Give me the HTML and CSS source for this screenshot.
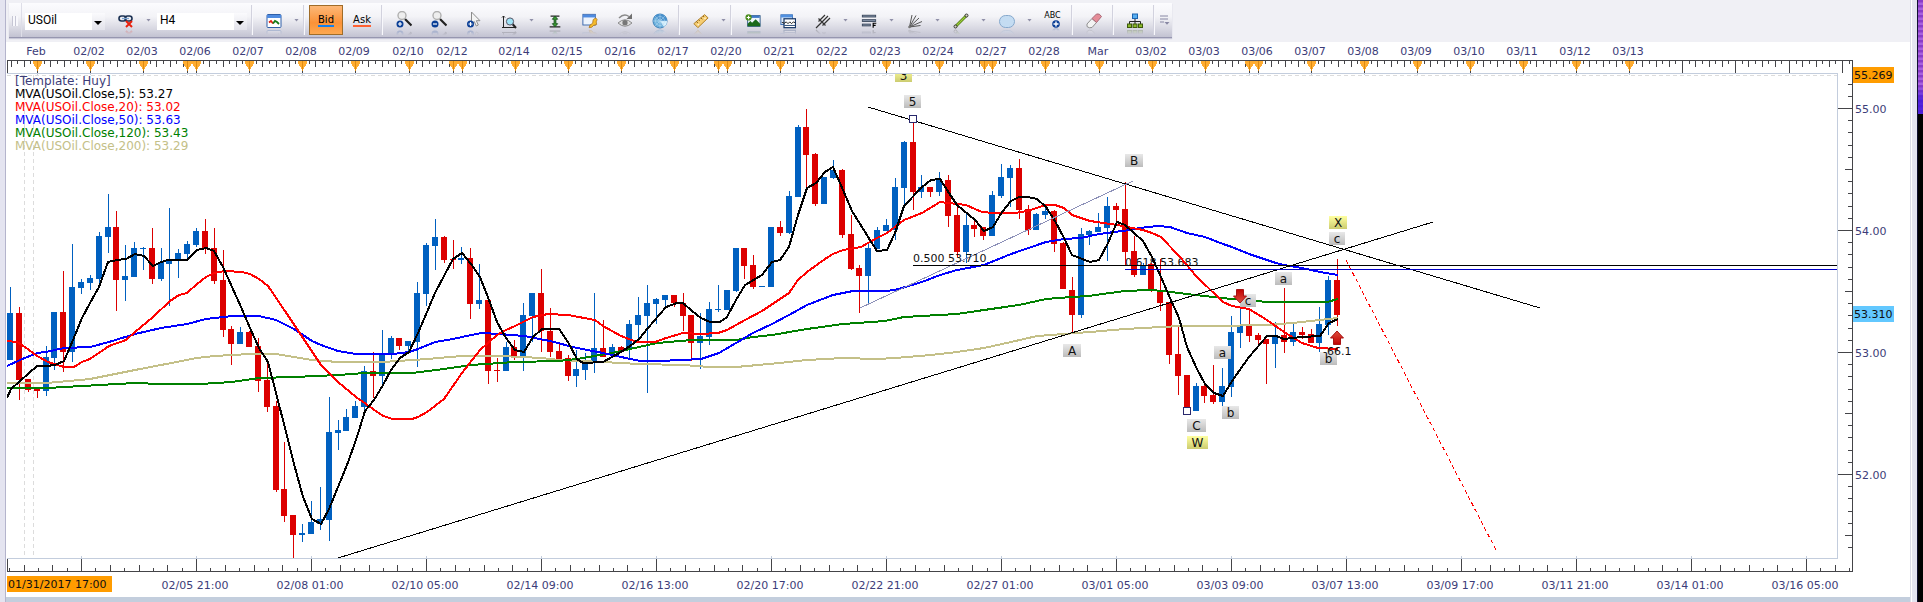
FILE: index.html
```html
<!DOCTYPE html>
<html lang="en">
  <head>
    <meta charset="utf-8" />
    <title>USOil H4</title>
    <link rel="stylesheet" href="styles.css" />
  </head>
  <body>
    <div class="edge edge-left"></div>
    <main class="window">
      <div class="toolbar-row">
        <div class="toolbar" role="toolbar" aria-label="Chart tools">
          <span class="grip"></span>
          <label class="combo symbol">
            <select aria-label="Symbol"><option>USOil</option></select>
          </label>
          <button class="tool" aria-label="Unlink">
            <svg viewBox="0 0 16 16"><g fill="none" stroke="#1b3152" stroke-width="1.6"><rect x="1" y="3" width="7" height="5" rx="2.5"/><rect x="7" y="3" width="7" height="5" rx="2.5"/></g><path d="M4 5.5h7" stroke="#7aa3d0" stroke-width="1.2"/><path d="M8 8l6 6M14 8l-6 6" stroke="#e8200c" stroke-width="2"/></svg>
          </button>
          <button class="drop" aria-label="More"></button>
          <label class="combo period">
            <select aria-label="Period"><option>H4</option></select>
          </label>
          <span class="sep"></span>
          <button class="tool" aria-label="Indicators">
            <svg viewBox="0 0 16 16"><rect x="1" y="1.5" width="14" height="13" rx="1" fill="#fff" stroke="#2f5fa8"/><path d="M1 2h14v3H1z" fill="#4f8be0"/><path d="M3 9.5l2-1.5 2 2.5" fill="none" stroke="#e02010" stroke-width="1.8"/><path d="M7 10.5l2-2.5 2 1 2 2" fill="none" stroke="#167a16" stroke-width="1.8"/></svg>
          </button>
          <button class="drop" aria-label="More"></button>
          <span class="sep"></span>
          <button class="side bid" aria-pressed="true"><span>Bid</span></button>
          <button class="side ask"><span>Ask</span></button>
          <span class="sep"></span>
          <button class="tool" aria-label="Zoom in">
            <svg class="tall" viewBox="0 0 16 18"><path d="M9 8l6.5 6.5" stroke="#222" stroke-width="2.2"/><circle cx="6" cy="4.5" r="4" fill="#eee" stroke="#b0b0b0" stroke-width="1.4"/><circle cx="4" cy="13" r="3.5" fill="#0b3f96"/><path d="M2 13h4M4 11v4" stroke="#fff" stroke-width="1.2"/></svg>
          </button>
          <button class="tool" aria-label="Zoom out">
            <svg class="tall" viewBox="0 0 16 18"><path d="M9 8l6.5 6.5" stroke="#222" stroke-width="2.2"/><circle cx="6" cy="4.5" r="4" fill="#eee" stroke="#b0b0b0" stroke-width="1.4"/><circle cx="4" cy="13" r="3.5" fill="#0b3f96"/><path d="M2 13h4" stroke="#fff" stroke-width="1.2"/></svg>
          </button>
          <button class="tool" aria-label="Select and zoom">
            <svg class="tall" viewBox="0 0 16 18"><path d="M5.5 1v12l2.8-2.5 2 4.5 2-1-2-4.3H14z" fill="#f4f4f4" stroke="#8c8c8c"/><circle cx="4.5" cy="13" r="3.5" fill="#0b3f96"/><path d="M2.5 13h4M4.5 11v4" stroke="#fff" stroke-width="1.2"/></svg>
          </button>
          <button class="tool" aria-label="Scale zoom">
            <svg class="low" viewBox="0 0 16 16"><path d="M2.5 2v12M1 3.5L2.5 2 4 3.5M1 13.5h13" fill="none" stroke="#222"/><path d="M11.5 10l3.5 4" stroke="#222" stroke-width="2"/><circle cx="9" cy="7.5" r="3.6" fill="#9fe3f7" stroke="#556"/></svg>
          </button>
          <button class="drop" aria-label="More"></button>
          <button class="tool" aria-label="Fit height">
            <svg viewBox="0 0 16 18"><path d="M3 3.5h10M2 15.5h12" stroke="#222" stroke-width="1.4"/><path d="M8 3.5l3 3.5H9v5h2l-3 3.5L5 12h2V7H5z" fill="#3a9a30" stroke="#14501a"/></svg>
          </button>
          <button class="tool" aria-label="Chart properties">
            <svg viewBox="0 0 18 16"><rect x="1" y=".5" width="14" height="12" fill="#eef4fd" stroke="#2f5fa8"/><path d="M1 1h14v3H1z" fill="#4f8be0"/><path d="M8 15.5l1-3 3-2 .5-4 3-2 1.5 2-1 2.5.5 3-3.5 1-2 2z" fill="#f5bb2c" stroke="#a86c10" stroke-width=".8"/></svg>
          </button>
          <button class="tool" aria-label="Refresh view">
            <svg viewBox="0 0 16 16"><path d="M1 10q7-6.5 14 0-7 6.5-14 0z" fill="#ddd" stroke="#8a8a8a"/><circle cx="8" cy="9.7" r="2.6" fill="#777"/><path d="M2 5q5-5 10-1.5" fill="none" stroke="#8a8a8a" stroke-width="1.5"/><path d="M15 .5v5.5H9.5z" fill="#707070"/></svg>
          </button>
          <button class="tool" aria-label="Market radar">
            <svg viewBox="0 0 16 16"><circle cx="8" cy="8" r="7" fill="#6cb0dc" stroke="#3c7fb8"/><path d="M8 8L2 3.5A7.5 7.5 0 0 1 15 8z" fill="#4890cc"/><path d="M8 8h7a7 7 0 0 1-3 6z" fill="#d8f0fc"/><g fill="none" stroke="#b8dcf2" stroke-width=".5"><circle cx="8" cy="8" r="4.5"/><circle cx="8" cy="8" r="2"/><path d="M1 8h14M8 1v14M3 3l10 10M3 13L13 3"/></g></svg>
          </button>
          <span class="sep"></span>
          <button class="tool" aria-label="Ruler">
            <svg viewBox="0 0 18 16"><path d="M1 11L13 .8l4 3.7L5.5 15.5z" fill="#f6cd72" stroke="#a8761c"/><path d="M4 8.7l1.5 1.6M6.5 6.6l1 1.2M9 4.5l1.5 1.6M11.5 2.4l1 1.2" stroke="#7a5210"/><circle cx="6" cy="12" r="1" fill="#fff3cf"/><circle cx="13.5" cy="5" r="1" fill="#fff3cf"/></svg>
          </button>
          <button class="drop" aria-label="More"></button>
          <span class="sep"></span>
          <button class="tool" aria-label="Add picture">
            <svg viewBox="0 0 18 16"><rect x="3" y="2" width="14" height="12" fill="#eef6fd" stroke="#244f80"/><path d="M3.5 2h13v2.5h-13z" fill="#3d78c8"/><path d="M3 14v-3l3-3 2 2 4-4 5 5v3z" fill="#1a6a1a"/><circle cx="4" cy="4" r="3.5" fill="#4a8c1c"/><path d="M2 4h4M4 2v4" stroke="#fff" stroke-width="1.2"/></svg>
          </button>
          <button class="tool" aria-label="Add indicator">
            <svg viewBox="0 0 18 16"><rect x="1" y="1" width="13" height="11" fill="#dfe9f6" stroke="#2f66b0"/><path d="M1 1h13v3H1z" fill="#5090e0"/><rect x="4.5" y="5.5" width="13" height="10" fill="#fff" stroke="#173868" stroke-width="1.4"/><path d="M2 9.5l3 1 2-1.5 2 2 2-2 2 2 2-2 2 1" fill="none" stroke="#111"/><path d="M5 13h12" stroke="#173868"/></svg>
          </button>
          <button class="tool" aria-label="Pitchfork">
            <svg viewBox="0 0 16 16"><path d="M1 15L13 3M3.5 8.5L10 2M7.5 12.5L15 5M3.5 5.5l7 7" fill="none" stroke="#333" stroke-width="1.2"/></svg>
          </button>
          <button class="drop" aria-label="More"></button>
          <button class="tool" aria-label="Fibonacci">
            <svg viewBox="0 0 18 16"><g fill="#8593a8" stroke="#3a475c"><rect x="1.5" y="1.5" width="15" height="2"/><rect x="1.5" y="6.5" width="15" height="2"/><rect x="1.5" y="11.5" width="9" height="2"/></g><path d="M13.7 15.5v-5h3.5M13.7 13h2.8" fill="none" stroke="#000" stroke-width="1.3"/></svg>
          </button>
          <button class="drop" aria-label="More"></button>
          <button class="tool" aria-label="Gann fan">
            <svg viewBox="0 0 16 16"><path d="M2.5 14L5 2M2.5 14L9 2.5M2.5 14L12 5M2.5 14L15 8.5M2.5 14l11-1.5" stroke="#555"/><circle cx="2.5" cy="14" r="1.3" fill="#777"/></svg>
          </button>
          <button class="drop" aria-label="More"></button>
          <button class="tool" aria-label="Line">
            <svg viewBox="0 0 16 16"><path d="M2.5 13.5l11-11" stroke="#4f7a10" stroke-width="2.8"/><path d="M3 13L13 3" stroke="#9ccc3a" stroke-width="1.2"/><circle cx="2.5" cy="13.5" r="1.5" fill="#d8d8c0" stroke="#333"/><circle cx="13.5" cy="2.5" r="1.5" fill="#d8d8c0" stroke="#333"/></svg>
          </button>
          <button class="drop" aria-label="More"></button>
          <button class="tool" aria-label="Ellipse">
            <svg viewBox="0 0 16 16"><rect x=".5" y="2.5" width="15" height="12" rx="6" fill="#c4dcf2" stroke="#86a8cc"/></svg>
          </button>
          <button class="drop" aria-label="More"></button>
          <button class="tool abc" aria-label="Text label">
            <span>ABC</span>
            <svg viewBox="0 0 8 8"><circle cx="4" cy="4" r="3.8" fill="#0b3f96"/><path d="M1.5 4h5M4 1.5v5" stroke="#fff" stroke-width="1.4"/></svg>
          </button>
          <span class="sep"></span>
          <button class="tool" aria-label="Eraser">
            <svg viewBox="0 0 16 16"><path d="M1 11l5-5.5 4.5 4L6 14.5q-3 1-5-1z" fill="#f3f3f3" stroke="#8e8e8e"/><path d="M6 5.5L10.5 1q3-1 5 2.5l-5 6z" fill="#e58c98" stroke="#a86a78"/></svg>
          </button>
          <span class="sep"></span>
          <button class="tool" aria-label="Layout">
            <svg viewBox="0 0 16 16"><path d="M8 5v6M2.5 11V8.5h11V11" fill="none" stroke="#222"/><rect x="5.5" y="1" width="5" height="4.5" fill="#58aef0" stroke="#1c64b0"/><g fill="#8ab82a" stroke="#3e5a0c"><rect x=".5" y="11" width="4" height="3.5"/><rect x="6" y="11" width="4" height="3.5"/><rect x="11.5" y="11" width="4" height="3.5"/></g></svg>
          </button>
          <span class="sep"></span>
          <button class="overflow" aria-label="Toolbar options">
            <svg viewBox="0 0 10 10"><path d="M0 1h8M0 4h8M0 7h4" stroke="#8888a4"/><path d="M4.5 7h5L7 9.8z" fill="#8888a4"/></svg>
          </button>
        </div>
      </div>

      <section class="chart" aria-label="USOil four hour chart">
        <svg id="plot" class="plot"></svg>
        <ul class="legend">
          <li>[Template: Huy]</li>
          <li class="ma5">MVA(USOil.Close,5): 53.27</li>
          <li class="ma20">MVA(USOil.Close,20): 53.02</li>
          <li class="ma50">MVA(USOil.Close,50): 53.63</li>
          <li class="ma120">MVA(USOil.Close,120): 53.43</li>
          <li class="ma200">MVA(USOil.Close,200): 53.29</li>
        </ul>
      </section>
    </main>
    <div class="edge edge-right"></div>
    <div class="desktop"></div>

    <script src="chart.js"></script>
  </body>
</html>
```
FILE: styles.css
```css
* {
  box-sizing: border-box;
}
body {
  margin: 0;
  display: flex;
  min-height: 100vh;
  background: #fff;
  font-family: "DejaVu Sans", sans-serif;
  font-size: 11px;
  color: #3c3c78;
}

/* window frame */
.edge {
  background: #e4e4f0;
}
.edge-left {
  width: 6px;
  border-right: 1px solid #b4b4cc;
}
.edge-right {
  width: 8px;
  border-left: 1px solid #dcdce8;
  border-right: 1px solid #101030;
  box-shadow: inset 1px 0 #fff;
}
.desktop {
  width: 5px;
  background:
    linear-gradient(rgba(60, 20, 220, 0) 85px, rgba(60, 20, 220, 0.8) 100px) top / 100% 114px no-repeat,
    repeating-linear-gradient(#8a3cc8 0 2px, #a860e0 3px 5px) top / 100% 114px no-repeat,
    #000;
}
.window {
  flex: 1;
  min-width: 0;
  background: #fff;
  border-bottom: 5px solid #c3cedd;
}

/* toolbar */
.toolbar-row {
  display: flex;
  height: 42px;
  padding: 3px 3px 4px;
  background: #f0f0f5;
}
.toolbar {
  display: flex;
  align-items: stretch;
  background: linear-gradient(#fcfcfe, #f3f3f7 40%, #d8d8e2 75%, #c2c2d2);
  border-bottom: 1px solid #9696b0;
  box-shadow: 0 1px 1px #c8c8d8;
}
.toolbar button {
  padding: 0;
  border: 0;
  background: none;
  color: #000;
  font-family: inherit;
}
.grip {
  width: 13px;
  border-right: 1px solid #dedee8;
  background: repeating-linear-gradient(90deg, #c6c6d4 0 1px, #f8f8fc 1px 3px) 3px 13px / 6px 10px no-repeat;
}
.combo {
  position: relative;
  margin: 10px 3px 7px;
  background: #fff;
}
.symbol {
  width: 80px;
}
.period {
  width: 90px;
}
.combo::before {
  content: "";
  position: absolute;
  inset: 0 0 0 auto;
  width: 13px;
  background: linear-gradient(#fbfbfd, #e2e2ea);
  pointer-events: none;
}
.combo::after {
  content: "";
  position: absolute;
  right: 3px;
  top: 8px;
  width: 8px;
  height: 4px;
  background: #000;
  clip-path: polygon(0 0, 100% 0, 50% 100%);
  pointer-events: none;
}
.combo select {
  appearance: none;
  display: block;
  width: 100%;
  height: 14px;
  padding: 0 3px;
  border: 0;
  background: none;
  color: #000;
  font: 12px/14px Roboto, sans-serif;
}
.sep {
  width: 1px;
  margin: 2px 3px 2px 2px;
  background: #f8f8fc;
  box-shadow: -1px 0 #d2d2de;
}
.tool {
  width: 35px;
  height: 30px;
  display: flex;
  align-items: center;
  justify-content: center;
}
.tool svg {
  width: 16px;
  height: 16px;
  margin-top: 6px;
  -webkit-box-reflect: below 0 linear-gradient(transparent 65%, rgba(0, 0, 0, 0.3));
}
.tool .tall {
  height: 18px;
  margin-top: 4px;
}
.tool .low {
  margin-top: 8px;
}
.drop {
  width: 11px;
}
.drop::before {
  content: "";
  display: block;
  width: 5px;
  height: 3px;
  margin: 0 auto;
  background: #9090a8;
  clip-path: polygon(0 0, 100% 0, 50% 100%);
}
.toolbar .side {
  width: 34px;
  margin: 2px 1px;
  font-size: 10px;
  line-height: 11px;
}
.side span {
  display: inline-block;
  border-bottom: 2px solid #ff6030;
}
.toolbar .bid {
  border: 1px solid #a06c28;
  background: linear-gradient(#fdb878, #fb9238 60%, #fda850);
}
.bid span {
  border-color: #1080f0;
}
.toolbar .abc {
  flex-direction: column;
  padding-top: 4px;
  font-size: 8px;
  line-height: 8px;
}
.tool.abc svg {
  width: 8px;
  height: 8px;
  margin: 0 0 0 6px;
}
.overflow {
  width: 14px;
}
.overflow svg {
  width: 10px;
  height: 10px;
}

/* chart */
.chart {
  position: relative;
}
.plot {
  display: block;
  width: 100%;
  height: 555px;
}
.plot text {
  fill: #3c3c78;
}
.plot .centered,
.plot .mark {
  text-anchor: middle;
}
.plot .mark,
.plot .note,
.plot .flag {
  fill: #101010;
}
.plot .mark {
  font-size: 12px;
}
.crisp {
  shape-rendering: crispEdges;
}
.legend {
  position: absolute;
  left: 9px;
  top: 33px;
  margin: 0;
  padding: 0;
  list-style: none;
  font-size: 12px;
  line-height: 13px;
}
.ma5 {
  color: #000;
}
.ma20 {
  color: #f00;
}
.ma50 {
  color: #00f;
}
.ma120 {
  color: #008000;
}
.ma200 {
  color: #c4c088;
}
```
FILE: chart.js
```js
const NS = "http://www.w3.org/2000/svg";
const plot = document.getElementById("plot");

const LEFT = 6; // width of the window edge
const HEIGHT = 555;
const TOP = -18; // room for the date labels above the ruler
const BAR = 115 / 13;
const FIRST = 10.7;

const UP = "#0060c0";
const DOWN = "#dc0000";
const AXIS = "#444448";

// high, low, body top, body bottom, 1 = up
const bars = [
  [227, 300, 253, 300, 1], [247, 340, 253, 320, 0], [319, 332, 319, 330, 0], [329, 338, 329, 331, 0],
  [286, 336, 297, 331, 1], [252, 310, 252, 298, 1], [211, 312, 252, 292, 0], [184, 302, 227, 292, 1],
  [219, 234, 222, 228, 1], [215, 230, 218, 223, 1], [172, 225, 176, 219, 1], [134, 193, 167, 177, 1],
  [151, 251, 167, 220, 0], [185, 241, 216, 220, 1], [182, 217, 188, 217, 1], [187, 210, 188, 189, 1],
  [168, 224, 188, 219, 0], [188, 221, 202, 219, 1], [148, 246, 200, 204, 1], [189, 218, 193, 200, 1],
  [181, 199, 184, 194, 1], [168, 187, 171, 185, 1], [159, 194, 171, 188, 0], [168, 224, 188, 221, 0],
  [190, 277, 220, 270, 0], [266, 305, 269, 284, 0], [267, 284, 272, 284, 1], [271, 287, 272, 287, 0],
  [278, 332, 286, 321, 0], [303, 352, 320, 347, 0], [341, 432, 346, 430, 0], [382, 462, 429, 456, 0],
  [455, 498, 455, 475, 0], [464, 482, 473, 475, 1], [441, 474, 462, 474, 1], [427, 470, 459, 464, 1],
  [337, 481, 372, 460, 1], [360, 390, 370, 373, 1], [349, 371, 357, 371, 1], [341, 358, 346, 358, 1],
  [306, 350, 311, 347, 1], [292, 338, 311, 316, 0], [270, 325, 293, 316, 1], [276, 299, 278, 294, 1],
  [278, 290, 278, 286, 0], [281, 291, 281, 286, 1], [222, 307, 233, 282, 1], [183, 246, 185, 234, 1],
  [159, 210, 177, 186, 1], [176, 203, 177, 200, 0], [180, 209, 199, 200, 0], [187, 204, 198, 200, 1],
  [188, 259, 198, 244, 0], [204, 249, 240, 244, 1], [240, 324, 240, 311, 0], [298, 322, 310, 311, 0],
  [282, 311, 287, 311, 1], [280, 300, 287, 296, 0], [243, 311, 255, 297, 1], [233, 282, 233, 256, 1],
  [209, 292, 233, 271, 0], [248, 297, 271, 292, 0], [284, 300, 291, 300, 0], [295, 321, 298, 316, 0],
  [290, 327, 309, 316, 1], [293, 320, 301, 310, 1], [233, 313, 288, 301, 1], [260, 297, 288, 297, 0],
  [284, 294, 287, 294, 1], [286, 292, 287, 292, 0], [260, 299, 264, 289, 1], [237, 280, 255, 265, 1],
  [225, 333, 243, 256, 1], [238, 264, 239, 244, 1], [235, 247, 235, 240, 1], [235, 247, 235, 243, 0],
  [233, 271, 243, 256, 0], [255, 301, 255, 283, 0], [253, 309, 276, 283, 1], [242, 285, 249, 277, 1],
  [225, 252, 249, 250, 1], [230, 250, 230, 250, 1], [188, 232, 188, 231, 1], [188, 219, 188, 206, 0],
  [195, 229, 205, 227, 0], [226, 227, 226, 227, 1], [167, 227, 167, 227, 1], [161, 176, 167, 173, 0],
  [131, 174, 136, 173, 1], [65, 137, 67, 137, 1], [49, 132, 67, 95, 0], [93, 146, 94, 144, 0],
  [117, 144, 117, 144, 1], [100, 119, 110, 118, 1], [109, 178, 110, 175, 0], [155, 210, 174, 209, 0],
  [205, 253, 208, 216, 0], [182, 243, 188, 216, 1], [167, 189, 170, 189, 1], [159, 171, 165, 171, 1],
  [118, 180, 127, 170, 1], [81, 144, 82, 128, 1], [63, 150, 82, 132, 0], [115, 138, 127, 132, 1],
  [127, 137, 127, 132, 0], [112, 136, 120, 132, 1], [115, 167, 120, 156, 0], [145, 197, 155, 192, 0],
  [152, 203, 165, 192, 1], [160, 177, 165, 169, 0], [167, 180, 167, 176, 0], [131, 176, 135, 176, 1],
  [104, 138, 117, 136, 1], [105, 147, 108, 118, 1], [99, 159, 108, 150, 0], [145, 175, 149, 170, 0],
  [153, 170, 154, 170, 1], [147, 159, 151, 155, 1], [150, 192, 151, 184, 0], [182, 229, 183, 229, 0],
  [217, 272, 230, 255, 0], [168, 258, 174, 255, 1], [170, 185, 171, 175, 1], [153, 172, 167, 172, 1],
  [137, 201, 146, 168, 1], [143, 162, 146, 150, 0], [122, 205, 149, 192, 0], [176, 217, 191, 215, 0],
  [203, 215, 206, 215, 1], [203, 232, 204, 230, 0], [199, 251, 230, 243, 0], [242, 304, 242, 295, 0],
  [267, 335, 294, 316, 0], [315, 347, 315, 347, 0], [323, 351, 326, 351, 1], [322, 343, 326, 336, 0],
  [305, 344, 335, 342, 0], [308, 346, 326, 342, 1], [256, 337, 272, 327, 1], [248, 288, 265, 273, 1],
  [249, 282, 266, 276, 0], [273, 284, 275, 280, 0], [279, 324, 279, 284, 0], [262, 308, 275, 284, 1],
  [228, 293, 275, 282, 0], [264, 286, 272, 282, 1], [267, 279, 272, 275, 0], [269, 283, 274, 283, 0],
  [247, 292, 264, 283, 1], [216, 275, 220, 265, 1], [199, 266, 220, 255, 0],
];

const averages = [
  ["#c4c088", "7,323 47,323 90,319 135,310 161,305 197,298 214,296 250,294 276,294 294,297 312,300 338,302 383,302 427,299 462,296 500,296 542,298 559,300 603,302 639,304 683,305 710,307 736,307 780,303 807,300 843,298 877,299 895,298 931,295 957,292 984,288 1011,282 1037,276 1064,274 1090,272 1125,269 1180,266 1213,266 1267,265 1293,263 1320,260 1338,258"],
  ["#008000", "7,328 47,328 82,326 135,323 160,324 200,324 232,322 259,318 294,317 338,315 365,313 412,313 444,309 471,305 515,302 559,301 577,299 612,293 639,287 657,283 692,280 736,280 753,277 772,275 807,269 843,264 885,261 904,257 957,254 984,250 1019,245 1046,239 1072,237 1088,236 1125,231 1150,230 1163,231 1187,234 1213,237 1232,239 1247,240 1267,242 1327,242 1338,239"],
  ["#0000ff", "7,306 20,300 37,293 46,292 64,288 90,287 109,282 135,274 161,268 187,264 206,259 233,256 259,256 276,260 294,269 312,281 321,285 338,291 356,294 393,294 409,292 418,289 435,282 453,279 471,275 482,273 500,274 524,276 550,281 577,288 603,293 621,297 640,301 660,301 701,299 719,293 736,283 753,273 772,264 789,255 807,245 833,235 853,231 885,231 895,230 922,222 940,215 957,210 984,205 1011,194 1046,182 1064,179 1081,178 1099,174 1130,170 1140,168 1157,166 1170,167 1187,173 1205,177 1223,184 1232,187 1249,194 1276,203 1284,205 1302,208 1320,212 1338,215"],
  ["#ff0000", "7,281 17,282 25,287 37,296 48,302 64,307 74,307 82,302 90,299 109,286 126,280 135,272 153,257 170,241 179,235 187,233 197,224 206,217 214,213 225,211 242,212 250,214 259,219 268,226 285,251 303,278 321,305 338,322 356,337 383,356 393,359 412,359 418,357 427,352 444,339 462,313 480,290 497,275 506,270 515,266 533,257 548,254 568,255 595,260 603,266 621,276 637,282 655,282 666,278 683,273 700,274 718,273 727,270 745,260 762,251 780,239 789,233 798,220 807,212 825,199 833,194 843,190 861,187 877,178 887,173 904,160 922,153 940,142 966,145 975,149 982,152 993,153 1015,153 1027,151 1046,145 1055,145 1064,148 1072,155 1090,161 1117,165 1143,170 1152,173 1161,177 1180,197 1196,216 1223,242 1232,246 1249,249 1267,260 1284,272 1302,283 1318,288 1338,289"],
  ["#000000", "7,338 11,329 20,321 29,313 37,306 46,306 55,305 64,301 73,280 82,258 90,243 99,227 108,202 117,200 126,199 135,194 144,196 153,206 161,202 168,200 187,200 197,190 206,188 214,191 223,207 241,247 250,268 259,288 268,302 276,333 285,368 294,404 303,437 312,459 321,464 329,449 338,427 347,405 356,380 365,351 374,340 383,325 391,310 400,298 409,292 418,273 427,252 435,233 444,216 453,199 462,193 471,204 480,217 489,240 497,262 506,278 515,290 524,292 533,277 542,269 559,269 568,282 577,299 583,303 603,302 621,292 630,286 639,279 648,268 666,247 677,243 683,243 692,251 701,258 710,262 720,262 727,257 736,240 745,225 762,215 772,202 780,200 789,187 798,155 807,128 816,123 825,112 833,107 843,130 852,151 870,180 877,191 887,190 895,173 904,146 922,127 931,120 940,119 949,133 957,145 975,160 984,171 993,167 1002,152 1011,141 1019,137 1028,137 1037,139 1046,147 1055,161 1064,178 1072,195 1090,202 1099,200 1108,183 1117,162 1125,165 1143,181 1152,197 1161,217 1170,238 1179,258 1187,287 1196,307 1205,324 1214,333 1223,336 1232,321 1249,297 1267,276 1276,276 1284,279 1302,277 1320,276 1329,263 1338,259"],
];

// day starts on the upper ruler: x, label
const days = [
  [37, "Feb"], [90, "02/02"], [143, "02/03"], [187, ""], [196, "02/06"], [249, "02/07"], [302, "02/08"],
  [355, "02/09"], [409, "02/10"], [453, "02/12"], [462, ""], [515, "02/14"], [568, "02/15"], [621, "02/16"],
  [674, "02/17"], [718, ""], [727, "02/20"], [780, "02/21"], [833, "02/22"], [886, "02/23"], [939, "02/24"],
  [984, ""], [992, "02/27"], [1045, "02/28"], [1099, "Mar"], [1152, "03/02"], [1205, "03/03"], [1249, ""],
  [1258, "03/06"], [1311, "03/07"], [1364, "03/08"], [1417, "03/09"], [1470, "03/10"], [1523, "03/11"],
  [1576, "03/12"], [1629, "03/13"], [1682, null], [1735, null], [1789, null], [1842, null],
];

const times = [
  "", "02/05 21:00", "02/08 01:00", "02/10 05:00", "02/14 09:00", "02/16 13:00", "02/20 17:00", "02/22 21:00",
  "02/27 01:00", "03/01 05:00", "03/03 09:00", "03/07 13:00", "03/09 17:00", "03/11 21:00", "03/14 01:00",
  "03/16 05:00",
];

// Elliott wave marks: text, x, y, width, fill
const marks = [
  ["3", 895, 9, 17, "wave"], ["5", 904, 35, 17, "sub"], ["B", 1125, 94, 18, "sub"], ["A", 1063, 284, 18, "sub"],
  ["X", 1329, 156, 18, "wave"], ["c", 1329, 172, 16, "sub"], ["a", 1275, 212, 17, "sub"],
  ["c", 1240, 234, 16, "sub"], ["a", 1214, 286, 17, "sub"], ["b", 1222, 346, 17, "sub"],
  ["C", 1187, 359, 19, "sub"], ["W", 1187, 376, 21, "wave"], ["b", 1320, 292, 17, "sub"],
];

function el(name, attrs, parent, text) {
  const node = document.createElementNS(NS, name);
  for (const key in attrs) node.setAttribute(key, attrs[key]);
  if (text) node.textContent = text;
  parent.appendChild(node);
  return node;
}

function line(parent, x1, y1, x2, y2, stroke, extra) {
  return el("line", { x1, y1, x2, y2, stroke, ...extra }, parent);
}

function rect(parent, x, y, width, height, fill, extra) {
  return el("rect", { x, y, width, height, fill, ...extra }, parent);
}

function priceY(price) {
  return 48.5 + (55 - price) * 122;
}

function gradient(defs, id, from, to) {
  const g = el("linearGradient", { id, x1: 0, y1: 0, x2: 0, y2: 1 }, defs);
  el("stop", { offset: 0, "stop-color": from }, g);
  el("stop", { offset: 1, "stop-color": to }, g);
}

function drawRulers(g, axisX, edge) {
  rect(g, 7, 0, axisX - 6, 1, AXIS);
  rect(g, 7, 511, axisX - 6, 1, AXIS);
  rect(g, axisX, 0, 1, 512, AXIS);
  rect(g, 7, 0, 1, 13, AXIS);
  rect(g, 7, 498, 1, 14, AXIS);

  // upper ruler, three hour steps
  const starts = [[-16, null], ...days, [axisX + 40, null]];
  for (let d = 0; d < starts.length - 1; d++) {
    const [x, label] = starts[d];
    const next = starts[d + 1][0];
    for (let k = 1; x + k * 6.625 < next - 3; k++) {
      const tx = Math.round(x + k * 6.625);
      if (tx > 7 && tx < axisX) rect(g, tx, 1, 1, k % 2 ? 3 : 6, AXIS);
    }
    if (d === 0 || x > axisX) continue;
    rect(g, x, 1, 1, 12, AXIS);
    if (label === null) continue;
    rect(g, x, 13, 1, 2, "#c3cddd");
    el("path", { d: `M${x - 4} 1h9v2l-4 7h-1l-4 -7z`, fill: "#ffac30" }, g);
    rect(g, x, 1, 1, 10, "#e08c10");
    if (label) el("text", { x: x - 1, y: -5, class: "centered" }, plot, label);
  }

  // lower ruler
  for (let k = -5; ; k++) {
    const x = Math.round(81 + k * 14.375);
    if (x > axisX - 1) break;
    const h = k % 8 === 0 ? 12 : k % 2 ? 3 : 6;
    rect(g, x, 511 - h, 1, h, AXIS);
    if (k % 8 === 0) {
      rect(g, x, 496, 1, 3, "#c3cddd");
      el("text", { x: x - 1, y: 529, class: "centered" }, plot, times[k / 8]);
    }
  }

  // price scale
  for (let p = 514; p <= 552; p++) {
    const y = Math.round(priceY(p / 10) - 0.5);
    const w = p % 10 === 0 ? 14 : p % 5 === 0 ? 7 : 4;
    rect(g, axisX - w, y, w, 1, AXIS);
    if (p % 10 === 0) el("text", { x: axisX + 3, y: y + 5 }, plot, (p / 10).toFixed(2));
  }

  // plot frame
  rect(g, 7, 13, edge - 6, 1, "#c3cddd");
  rect(g, 7, 498, edge - 6, 1, "#c3cddd");
  rect(g, edge, 13, 1, 486, "#c3cddd");
  line(g, 7, 15.5, edge, 15.5, "#dcdcdc", { "stroke-dasharray": "4 3" });
  line(g, 24.5, 15, 24.5, 498, "#dcdcdc", { "stroke-dasharray": "4 3" });
  line(g, 33.5, 15, 33.5, 498, "#dcdcdc", { "stroke-dasharray": "4 3" });
}

function drawArrow(x, y, turn) {
  el("path", {
    d: "M0 -7L6.5 0H3.5V6.5H-3.5V0H-6.5Z",
    fill: "url(#arrow)",
    stroke: "#a81414",
    transform: `translate(${x} ${y}) rotate(${turn})`,
  }, plot);
}

function draw() {
  const width = plot.clientWidth;
  const axisX = LEFT + width - 58;
  const edge = axisX - 15;
  plot.replaceChildren();
  plot.setAttribute("viewBox", `${LEFT} ${TOP} ${width} ${HEIGHT}`);

  const defs = el("defs", {}, plot);
  gradient(defs, "wave", "#ffffa0", "#cccc70");
  gradient(defs, "sub", "#e8e8e8", "#bcbcbc");
  gradient(defs, "arrow", "#e05040", "#c00000");
  const clip = el("clipPath", { id: "frame" }, defs);
  rect(clip, 7, 14, edge - 7, 484, "#000");

  drawRulers(el("g", { class: "crisp" }, plot), axisX, edge);

  const body = el("g", { "clip-path": "url(#frame)" }, plot);
  el("text", { x: 1125, y: 206, class: "note" }, body, "0.618 53.683");

  const candles = el("g", { class: "crisp" }, body);
  bars.forEach(([high, low, top, bottom, up], i) => {
    const x = Math.round(FIRST + i * BAR - 0.5);
    const color = up ? UP : DOWN;
    rect(candles, x, high, 1, low - high, color);
    rect(candles, x - 3, top, 6, bottom - top, color);
  });

  const lines = el("g", { class: "crisp", fill: "none" }, body);
  averages.forEach(([stroke, points]) => {
    el("polyline", { points, stroke, "stroke-width": 2 }, lines);
  });

  line(lines, 338, 498, 1433, 162, "#000");
  line(lines, 868, 47, 1540, 248, "#000");
  line(lines, 860, 248, 1133, 121, "#8c90b8");
  line(lines, 1346, 200, 1496, 490, "#f00", { "stroke-dasharray": "4 3" });
  rect(lines, 913, 205, edge - 913, 1, "#000");
  rect(lines, 1125, 209, edge - 1125, 1, "#0000c8");
  rect(lines, 909.5, 55.5, 7, 7, "#fff", { stroke: "#28286c" });
  rect(lines, 1183.5, 347.5, 7, 7, "#fff", { stroke: "#28286c" });

  const labels = el("g", { "clip-path": "url(#frame)" }, plot);
  marks.forEach(([text, x, y, w, kind]) => {
    rect(labels, x, y, w, 13, `url(#${kind})`);
    el("text", { x: x + w / 2, y: y + 11, class: "mark" }, labels, text);
  });
  el("text", { x: 913, y: 202, class: "note" }, labels, "0.500 53.710");
  el("text", { x: 1323, y: 295, class: "note" }, labels, "-66.1");
  drawArrow(1240, 236, 180);
  drawArrow(1337, 278, 0);

  // highlighted values on the scales
  rect(plot, axisX + 1, 7, 41, 16, "#ff9c00");
  el("text", { x: axisX + 2, y: 19, class: "flag" }, plot, "55.269");
  rect(plot, axisX + 1, 246, 41, 16, "#62c8ff");
  el("text", { x: axisX + 2, y: 258, class: "flag" }, plot, "53.310");
  rect(plot, 7, 516, 105, 16, "#ff9c00");
  el("text", { x: 8, y: 528, class: "flag" }, plot, "01/31/2017 17:00");
}

draw();
window.addEventListener("resize", draw);
```
